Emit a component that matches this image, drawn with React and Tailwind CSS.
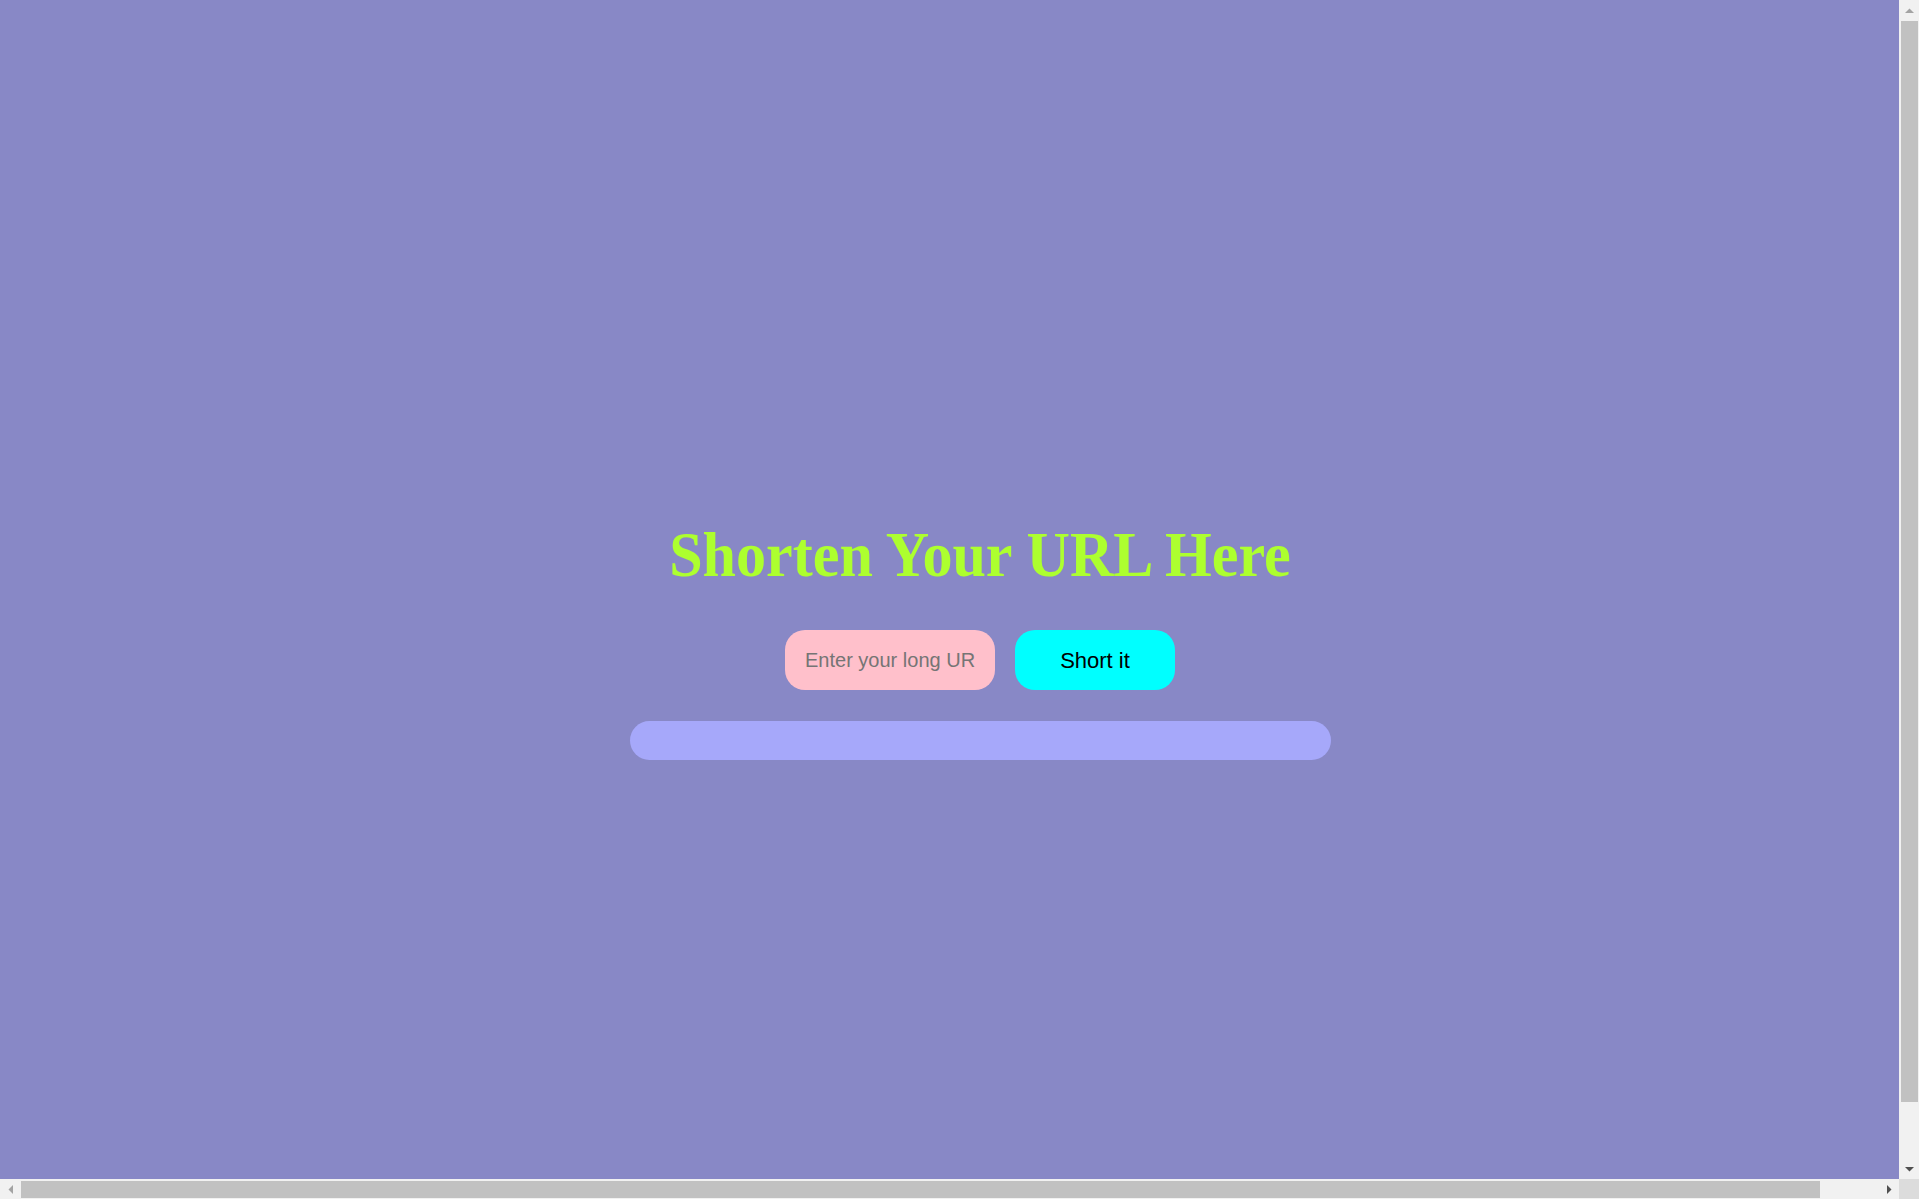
import React from "react";

function Tri({ dir, color }) {
  const pts = {
    up: "0,5 4.5,0.5 9,5",
    down: "0,0 9,0 4.5,4.5",
    left: "5,0 5,9 0.5,4.5",
    right: "0,0 0,9 4.5,4.5",
  }[dir];
  const w = dir === "up" || dir === "down" ? 9 : 5;
  const h = dir === "up" || dir === "down" ? 5 : 9;
  return (
    <svg width={w} height={h} viewBox={`0 0 ${w} ${h}`}>
      <polygon points={pts} fill={color} />
    </svg>
  );
}

export default function App() {
  return (
    <div className="h-screen w-screen flex flex-col overflow-hidden bg-[#f1f1f1]">
      <div className="flex flex-1 min-h-0">
        <main className="flex-1 min-w-0 overflow-hidden bg-[#8888c6]">
          <div className="w-[1960px] flex flex-col items-center pt-[523px]">
            <h1
              className="m-0 text-[64px] leading-none font-bold text-[#adff2f] whitespace-nowrap scale-x-[0.939]"
              style={{ fontFamily: '"Liberation Serif", "Times New Roman", serif' }}
            >
              Shorten Your URL Here
            </h1>
            <div
              className="flex gap-5 mt-[43px]"
              style={{ fontFamily: '"Liberation Sans", Arial, sans-serif' }}
            >
              <input
                type="text"
                placeholder="Enter your long URL"
                className="w-[210px] h-[60px] rounded-[20px] bg-[#ffc0cb] px-5 text-[20px] text-black placeholder:text-[#757575] outline-none border-0"
              />
              <button className="w-[160px] h-[60px] rounded-[20px] bg-[#00ffff] text-[22px] text-black border-0">
                Short it
              </button>
            </div>
            <div className="w-[701px] h-[39px] mt-[31px] rounded-[20px] bg-[#a6a8fa]" />
          </div>
        </main>
        <div className="w-5 flex flex-col bg-[#f1f1f1]">
          <div className="h-5 flex items-center justify-center">
            <Tri dir="up" color="#a3a3a3" />
          </div>
          <div className="flex-1 min-h-0">
            <div className="ml-[2px] mt-px w-[17px] h-[1081px] bg-[#c1c1c1]" />
          </div>
          <div className="h-5 flex items-center justify-center">
            <Tri dir="down" color="#505050" />
          </div>
        </div>
      </div>
      <div className="h-5 flex bg-[#f1f1f1]">
        <div className="w-5 flex items-center justify-center">
          <Tri dir="left" color="#a3a3a3" />
        </div>
        <div className="flex-1 min-w-0">
          <div className="ml-px mt-[2px] w-[1799px] h-[17px] bg-[#c1c1c1]" />
        </div>
        <div className="w-5 flex items-center justify-center">
          <Tri dir="right" color="#505050" />
        </div>
        <div className="w-5 bg-[#dcdcdc]" />
      </div>
    </div>
  );
}
